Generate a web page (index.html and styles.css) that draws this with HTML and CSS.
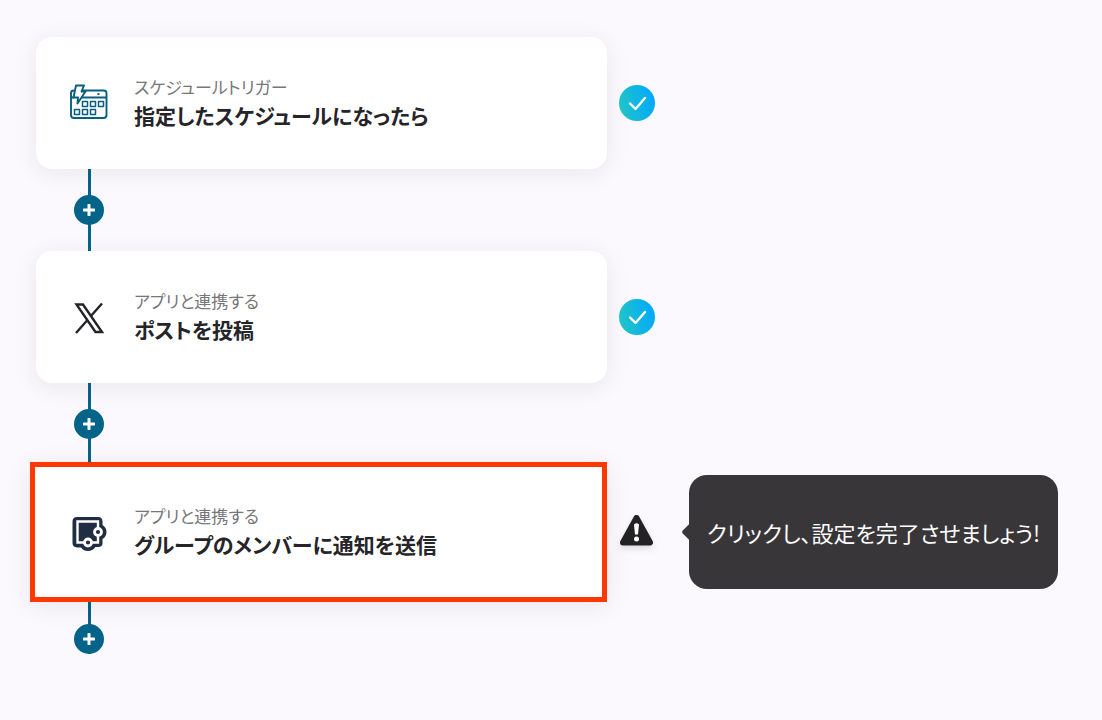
FILE: index.html
```html
<!DOCTYPE html>
<html lang="ja">
<head>
  <meta charset="utf-8">
  <title>フロー</title>
  <link rel="stylesheet" href="styles.css">
</head>
<body>
  <div class="flow">

    <!-- Step 1 -->
    <div class="step">
      <div class="card">
        <svg class="card-icon" viewBox="0 0 40 40" fill="none" stroke="#075f80" stroke-width="1.9" stroke-linejoin="round">
          <path d="M13 7.500H34.500Q37.500 7.500 37.500 10V32Q37.500 35 34.500 35H5Q2 35 2 32V10Q2 7.500 5 7.500"/>
          <path d="M12 14.500H37.500M2 14.500H5"/>
          <path d="M7 2.500H15L12.500 8.500H16.500L8.500 20.500L9 14.500H4.500Z" fill="#fff"/>
          <path d="M28.500 11H30.500"/>
          <g stroke-width="1.5">
            <rect x="13.500" y="18.500" width="5" height="5"/><rect x="21.500" y="18.500" width="5" height="5"/><rect x="29.500" y="18.500" width="5" height="5"/>
            <rect x="5.500" y="26.500" width="5" height="5"/><rect x="13.500" y="26.500" width="5" height="5"/><rect x="21.500" y="26.500" width="5" height="5"/>
          </g>
        </svg>
        <div class="card-text">
          <p class="label">スケジュールトリガー</p>
          <h2 class="title">指定したスケジュールになったら</h2>
        </div>
      </div>
      <svg class="status" viewBox="0 0 36 36" role="img" aria-label="設定済み">
        <defs>
          <linearGradient id="done" x1="0" y1="0.6" x2="1" y2="0.4">
            <stop offset="0" stop-color="#20c5c8"/>
            <stop offset="1" stop-color="#02a8fb"/>
          </linearGradient>
        </defs>
        <circle cx="18" cy="18" r="18" fill="url(#done)"/>
        <path d="M11 18.500L16.500 24L26 13" fill="none" stroke="#fff" stroke-width="2.4" stroke-linecap="round" stroke-linejoin="round"/>
      </svg>
    </div>

    <div class="connector">
      <button type="button" class="add" aria-label="追加">
        <svg viewBox="0 0 12 12"><path d="M6 1V11M1 6H11"/></svg>
      </button>
    </div>

    <!-- Step 2 -->
    <div class="step">
      <div class="card">
        <svg class="card-icon" viewBox="0 0 40 40" fill="none" stroke="#252428">
          <path d="M7.500 7.500H14L33 35H26.500Z" stroke-width="2.400"/>
          <path d="M33 6.500L21.500 19.500M18.500 23L7 36" stroke-width="2.400"/>
        </svg>
        <div class="card-text">
          <p class="label">アプリと連携する</p>
          <h2 class="title">ポストを投稿</h2>
        </div>
      </div>
      <svg class="status" viewBox="0 0 36 36" role="img" aria-label="設定済み">
        <circle cx="18" cy="18" r="18" fill="url(#done)"/>
        <path d="M11 18.500L16.500 24L26 13" fill="none" stroke="#fff" stroke-width="2.4" stroke-linecap="round" stroke-linejoin="round"/>
      </svg>
    </div>

    <div class="connector">
      <button type="button" class="add" aria-label="追加">
        <svg viewBox="0 0 12 12"><path d="M6 1V11M1 6H11"/></svg>
      </button>
    </div>

    <!-- Step 3 -->
    <div class="step current">
      <div class="card selected">
        <svg class="card-icon" viewBox="0 0 40 40">
          <path d="M8 5H29Q33.500 5 33.500 9.500V13Q37.500 15.500 37.500 20Q37.500 24.500 33.500 27V32Q33 35 29 35H26.500Q23.500 39 19 39Q14.500 39 12 35.500H8Q3.500 35 3.500 31V9.500Q3.500 5 8 5Z" fill="#202d42"/>
          <path d="M8.500 9.500H29V30.500H8.500Z" fill="none" stroke="#fff" stroke-width="2.400"/>
          <circle cx="29" cy="20" r="3.500" fill="#202d42" stroke="#fff" stroke-width="2.800"/>
          <circle cx="19" cy="30.500" r="3.500" fill="#202d42" stroke="#fff" stroke-width="2.800"/>
        </svg>
        <div class="card-text">
          <p class="label">アプリと連携する</p>
          <h2 class="title">グループのメンバーに通知を送信</h2>
        </div>
      </div>
      <svg class="status warning" viewBox="0 3 36 36" role="img" aria-label="未設定">
        <path d="M17.500 7L31 31.500H4Z" fill="#222124" stroke="#222124" stroke-width="6" stroke-linejoin="round"/>
        <path d="M15 13.500Q17.500 11 20 13.500L19 23.500H16Z" fill="#fff"/>
        <circle cx="17.500" cy="28" r="2.500" fill="#fff"/>
      </svg>
      <div class="bubble">クリックし、設定を完了させましょう!</div>
    </div>

    <div class="connector last">
      <button type="button" class="add" aria-label="追加">
        <svg viewBox="0 0 12 12"><path d="M6 1V11M1 6H11"/></svg>
      </button>
    </div>

  </div>
</body>
</html>
```
FILE: styles.css
```css
* {
  box-sizing: border-box;
}

body {
  margin: 0;
  background-color: #fbf9fd;
  color: #252428;
  font-family: "Noto Sans CJK JP", sans-serif;
  font-feature-settings: "palt";
}

.flow {
  padding: 37px 44px 37px 30px;
}

.step {
  display: grid;
  grid-template-columns: minmax(0, 577px) 36px 1fr;
  column-gap: 12px;
  align-items: center;
}

/* the selection frame laps over the end of the connector above */
.step.current {
  margin-top: -3px;
}

.card {
  display: flex;
  align-items: center;
  gap: 25px;
  min-height: 132px;
  margin-left: 6px;
  padding: 0 33px;
  background-color: #fff;
  border-radius: 16px;
  box-shadow: 0 4px 24px rgba(40, 30, 50, 0.08);
}

.card.selected {
  min-height: 140px;
  margin-left: 0;
  padding: 0 34px;
  border: 5px solid #ff3803;
  border-radius: 0;
}

.card-icon {
  flex: none;
  width: 40px;
  height: 40px;
}

.card-text {
  padding-bottom: 2px;
}

.label {
  margin: 0;
  color: #77767a;
  font-size: 17px;
  line-height: 26px;
}

.title {
  margin: 0;
  font-size: 21px;
  font-weight: 700;
  line-height: 30px;
}

.status {
  width: 36px;
  height: 36px;
}

.warning {
  filter: drop-shadow(0 3px 3px rgba(0, 0, 0, 0.12));
}

.connector {
  display: flex;
  align-items: center;
  width: 30px;
  height: 82px;
  margin-left: 44px;
  background: linear-gradient(#046389, #046389) center / 3px 100% no-repeat;
}

.connector.last {
  height: 52px;
  align-items: flex-end;
}

.add {
  display: flex;
  align-items: center;
  justify-content: center;
  width: 30px;
  height: 30px;
  padding: 0;
  border: none;
  border-radius: 50%;
  background-color: #046389;
  cursor: pointer;
}

.add svg {
  width: 12px;
  height: 12px;
  fill: none;
  stroke: #fff;
  stroke-width: 3;
  stroke-linecap: round;
}

.bubble {
  position: relative;
  display: flex;
  align-items: center;
  min-height: 114px;
  margin-left: 22px;
  padding: 0 12px 0 18px;
  border-radius: 18px;
  background-color: #39363a;
  color: #fff;
  font-size: 22px;
  line-height: 30px;
}

.bubble::before {
  content: "";
  position: absolute;
  left: -5px;
  top: 50%;
  width: 13px;
  height: 13px;
  border-radius: 2px;
  background-color: #39363a;
  transform: translateY(-50%) rotate(45deg);
}
```
